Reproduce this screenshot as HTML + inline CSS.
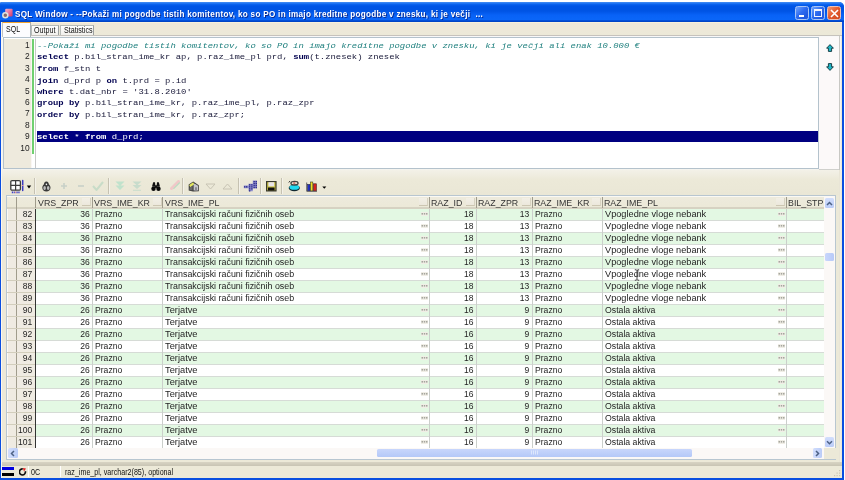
<!DOCTYPE html>
<html><head><meta charset="utf-8">
<style>
*{margin:0;padding:0;box-sizing:border-box}
html,body{width:845px;height:480px;overflow:hidden;background:#fff;font-family:"Liberation Sans",sans-serif}
.a{position:absolute}
#win{left:0;top:2px;width:843.8px;height:478px;background:#0A4FE0;border-radius:1.5px 5px 0 0}
#title{left:0;top:2px;width:843.8px;height:20px;border-radius:1.5px 5px 0 0;background:linear-gradient(#4A90F0 0px,#2A7CF5 1px,#0A62EE 2.5px,#0055E6 4px,#0054E4 9px,#0862F6 13px,#0A66F8 17.5px,#0048D0 18.8px,#0040C0 20px)}
#ttext{left:15px;top:7px;font-weight:bold;font-size:9px;letter-spacing:0.34px;transform:scaleX(0.9);transform-origin:0 0;color:#fff;white-space:pre;text-shadow:1px 1px 0 #0A2A90;line-height:14px}
.tb{top:5.8px;width:14.2px;height:14.6px;border:1px solid #A8C4F4;border-radius:2.5px;background:linear-gradient(135deg,#6EA4FF,#2F6CF0 45%,#1F58E0 80%,#2A5FE0)}
#body{left:1.2px;top:22px;width:840.5px;height:455.5px;background:linear-gradient(#F8F0DC 0,#F8F0DC 1px,#EEE7D8 1.5px,#ECE9D8 14px);border-left:1.2px solid #FAF8F0}
.mono{font-family:"Liberation Mono",monospace;font-size:8.4px;letter-spacing:0.31px;white-space:pre;line-height:11.4px}
.code{font-size:8.9px;letter-spacing:0.01px;line-height:14.25px;transform:scaleY(0.8);transform-origin:0 0}
.tt{font-size:8.8px;line-height:9px;color:#101010;white-space:pre;transform:scaleX(0.81);transform-origin:0 0}
.kw{color:#000050;font-weight:bold}
.sep{width:2px;height:16px;top:178px;background:linear-gradient(90deg,#C6C2B2 50%,#F4F2EA 50%)}
.g{font-size:9.7px;line-height:12px;color:#242424;white-space:pre}
.gl{transform-origin:0 0}
.gr{text-align:right;transform:scaleX(0.882);transform-origin:100% 0}
.hd{top:196px;height:12px;background:#ECE9D8;border-right:1px solid #A8A490}
.hb{top:197.6px;width:9px;height:8.6px;background:linear-gradient(#F2EFE6,#ECE8DC);border-right:1px solid #D6D1C0;border-bottom:1.2px solid #CCC6B2}
#root{left:0;top:0;width:845px;height:480px;filter:blur(0.4px)}
</style></head><body><div id="root" class="a">
<div id="win" class="a"></div>
<div id="title" class="a"></div>
<svg class="a" style="left:2px;top:7.5px" width="12" height="11" viewBox="0 0 12 11">
 <defs><linearGradient id="pk" x1="0" y1="0" x2="1" y2="1"><stop offset="0" stop-color="#F6B0D0"/><stop offset="0.5" stop-color="#E8709C"/><stop offset="1" stop-color="#C83868"/></linearGradient></defs>
 <rect x="3.2" y="0.8" width="7.4" height="7.8" rx="1" fill="url(#pk)"/>
 <circle cx="3.3" cy="7.3" r="2.5" fill="#8A6A6A" stroke="#E0E4E0" stroke-width="1.5"/>
</svg>
<div id="ttext" class="a">SQL Window - --Pokaži mi pogodbe tistih komitentov, ko so PO in imajo kreditne pogodbe v znesku, ki je večji  ...</div>
<div class="a tb" style="left:795.3px"><div class="a" style="left:3px;top:7.8px;width:5.2px;height:2.2px;background:#fff"></div></div>
<div class="a tb" style="left:811.2px"><div class="a" style="left:2.2px;top:2.6px;width:7.8px;height:7.6px;border:1px solid #F0F4FF;border-top-width:2px"></div></div>
<div class="a tb" style="left:826.6px;border-color:#F0C0B0;background:linear-gradient(135deg,#F49A70,#E2582C 50%,#D04A20)">
 <svg class="a" style="left:2px;top:2px" width="9" height="9" viewBox="0 0 9 9"><path d="M1 1L8 8M8 1L1 8" stroke="#fff" stroke-width="1.6"/></svg>
</div>
<div id="body" class="a"></div>

<!-- tabs -->
<div class="a" style="left:2.4px;top:36px;width:839px;height:134px;background:linear-gradient(#F8F8F8,#F4F3EE)"></div>
<div class="a" style="left:1.5px;top:22px;width:29.5px;height:15.3px;background:#FCFCFE;border-left:1px solid #C0C4C4;border-right:1px solid #A8B0B4;border-top:1.8px solid #F3A42F"></div>
<div class="a tt" style="left:5.8px;top:24.5px;transform:scaleX(0.8)">SQL</div>
<div class="a" style="left:31px;top:24.5px;width:28px;height:11.5px;background:linear-gradient(#FEFEFE,#F0EFEA);border:1px solid #B8BCB8;border-right-color:#9CA0A0;border-bottom:none"></div>
<div class="a tt" style="left:34.2px;top:25.7px">Output</div>
<div class="a" style="left:59.5px;top:24.5px;width:34px;height:11.5px;background:linear-gradient(#FEFEFE,#F0EFEA);border:1px solid #B8BCB8;border-right-color:#9CA0A0;border-bottom:none"></div>
<div class="a tt" style="left:63.7px;top:25.7px">Statistics</div>
<div class="a" style="left:30.5px;top:34.8px;width:811px;height:1.3px;background:#C6C2BC"></div>
<div class="a" style="left:3px;top:37.3px;width:816px;height:132.2px;background:#fff;border:1.5px solid #B4C2CC;border-bottom-width:1.6px;border-right-width:1px"></div>
<div class="a" style="left:4px;top:39px;width:27.3px;height:128.9px;background:#EEEADD"></div>
<div class="a" style="left:31.3px;top:39px;width:1.2px;height:128.9px;background:#FBF6F4"></div><div class="a" style="left:34.5px;top:39px;width:1.3px;height:128.9px;background:#C8C8C8"></div>
<div class="a" style="left:32px;top:39px;width:2.4px;height:115px;background:#70D070"></div>
<div class="a" style="left:36.5px;top:131px;width:781px;height:11.3px;background:#000080"></div>
<div class="a mono" style="left:4.5px;top:39.9px;width:25.2px;text-align:right;color:#222;font-family:'Liberation Sans',sans-serif;font-size:8.4px;letter-spacing:0">1
2
3
4
5
6
7
8
9
10</div>
<div class="a mono code" style="left:37px;top:41.35px;color:#181838"><span style="color:#20807F;font-style:italic">--Pokaži mi pogodbe tistih komitentov, ko so PO in imajo kreditne pogodbe v znesku, ki je večji ali enak 10.000 €</span>
<b class="kw">select</b> p.bil_stran_ime_kr ap, p.raz_ime_pl prd, <b class="kw">sum</b>(t.znesek) znesek
<b class="kw">from</b> f_stn t
<b class="kw">join</b> d_prd p <b class="kw">on</b> t.prd = p.id
<b class="kw">where</b> t.dat_nbr = '31.8.2010'
<b class="kw">group by</b> p.bil_stran_ime_kr, p.raz_ime_pl, p.raz_zpr
<b class="kw">order by</b> p.bil_stran_ime_kr, p.raz_zpr;

<span style="color:#fff"><b>select</b> * <b>from</b> d_prd;</span>
</div>
<div class="a" style="left:819px;top:37px;width:20.5px;height:132.5px;background:#FCF9F9;border-bottom:1.2px solid #D0D0CC"></div><div class="a" style="left:838.5px;top:36px;width:1.5px;height:134px;background:#C8C8C4"></div>
<svg class="a" style="left:825.5px;top:44px" width="8" height="8" viewBox="0 0 8 8"><path d="M4 0.6L7.4 4.2H5.6V7.4H2.4V4.2H0.6Z" fill="#20B8C8" stroke="#103038" stroke-width="0.9"/></svg>
<svg class="a" style="left:825.5px;top:62.6px" width="8" height="8" viewBox="0 0 8 8"><path d="M4 7.4L7.4 3.8H5.6V0.6H2.4V3.8H0.6Z" fill="#20B8C8" stroke="#103038" stroke-width="0.9"/></svg>

<!-- toolbar -->
<div class="a" style="left:1.5px;top:170px;width:840px;height:25px;background:linear-gradient(#F3F1E8,#ECE9D8 40%,#EAE7D6)"></div>
<svg class="a" style="left:9px;top:178.5px" width="25" height="15" viewBox="0 0 25 15">
 <rect x="1.8" y="1.6" width="9.6" height="9.6" rx="1.2" fill="#fff" stroke="#3C3C3C" stroke-width="1.3"/>
 <path d="M6.6 1.5V11.3M1.7 6.4H11.5" stroke="#3C3C3C" stroke-width="1.2"/>
 <path d="M13.7 1.5V6M13.7 7V11.5" stroke="#3A3AC0" stroke-width="1.5" stroke-linecap="round"/>
 <path d="M12.6 6.5H14.6" stroke="#E8A0A0" stroke-width="0.8"/>
 <path d="M2.8 13.4H5.8M7.4 13.4H10.6" stroke="#4040C8" stroke-width="1.6" stroke-dasharray="1.3 0.6"/>
 <path d="M6.6 12.6V14.2" stroke="#E08080" stroke-width="0.9"/>
 <path d="M17.8 6.6H22.2L20 9.4Z" fill="#000"/>
</svg>
<div class="a sep" style="left:34px"></div>
<svg class="a" style="left:41.7px;top:180.8px" width="9" height="11" viewBox="0 0 9 11">
 <path d="M4.4 0.4C2.6 0.4 2 1.8 2 3.3C0.8 4.3 0.3 5.6 0.3 6.8C0.3 9 2 10.5 4.4 10.5C6.8 10.5 8.5 9 8.5 6.8C8.5 5.6 8 4.3 6.8 3.3C6.8 1.8 6.2 0.4 4.4 0.4Z" fill="#3A3A3A"/>
 <ellipse cx="2.6" cy="7" rx="1.3" ry="2" fill="#BDBDBD"/>
 <ellipse cx="6.2" cy="7" rx="1.3" ry="2" fill="#BDBDBD"/>
 <circle cx="4.4" cy="3.4" r="0.8" fill="#F0F0F0"/>
</svg>
<svg class="a" style="left:60px;top:182px" width="8" height="8" viewBox="0 0 8 8"><path d="M4 1V7M1 4H7" stroke="#C8D0C8" stroke-width="1.6"/></svg>
<svg class="a" style="left:77px;top:182px" width="8" height="8" viewBox="0 0 8 8"><path d="M1 4H7" stroke="#C8D0C8" stroke-width="1.6"/></svg>
<svg class="a" style="left:92px;top:181px" width="12" height="10" viewBox="0 0 12 10"><path d="M1 5L4.5 9L11 1" stroke="#C8DCC8" stroke-width="2" fill="none"/></svg>
<div class="a sep" style="left:108px"></div>
<svg class="a" style="left:115px;top:181px" width="10" height="10" viewBox="0 0 10 10"><path d="M0.5 0.5H9.5L5 5Z M0.5 4.5H9.5L5 9Z" fill="#C0E2CC"/></svg>
<svg class="a" style="left:132px;top:181px" width="10" height="10" viewBox="0 0 10 10"><path d="M0.5 0.5H9.5L5 4.5Z M0.5 4H9.5L5 8Z" fill="#C8DCCC"/><path d="M1 9.3H9" stroke="#C8DCCC" stroke-width="1"/></svg>
<svg class="a" style="left:149.5px;top:180.5px" width="12" height="11" viewBox="0 0 12 11">
 <path d="M3.2 1.2H5L5.3 4.2H6.7L7 1.2H8.8L10 5.6L7.2 5.8L6.8 7H5.2L4.8 5.8L2 5.6Z" fill="#111"/>
 <circle cx="3.5" cy="7.7" r="2.2" fill="#0A0A0A"/>
 <circle cx="8.5" cy="7.7" r="2.2" fill="#0A0A0A"/>
 
</svg>
<svg class="a" style="left:169.5px;top:180px" width="11" height="10" viewBox="0 0 11 10">
 <path d="M1.5 8.5L8.5 1.5" stroke="#F0C8C8" stroke-width="3" stroke-linecap="round"/>
 <path d="M3.5 8.8L9.8 2.5" stroke="#B8DCC0" stroke-width="1.1"/>
</svg>
<div class="a sep" style="left:182px"></div>
<svg class="a" style="left:187.7px;top:180.6px" width="12" height="11" viewBox="0 0 12 11">
 <path d="M0.7 3.6L5.2 0.6L10.8 4.2V10.2L5 10.5L0.7 9.6Z" fill="#3A3A3A"/>
 <path d="M1.2 3.9L5.1 1.2L6.3 3.3L2.3 6.6Z" fill="#E4E860"/>
 <path d="M1.5 6.5L4.6 4.6V9.6L1.5 8.9Z" fill="#6A6A6A"/>
 <path d="M5.6 3.6L6.4 2.4L10 4.8V9.5H5.6Z" fill="#C4C4CC"/>
 <path d="M7 6.2H9V9.5H7Z" fill="#8A8A90"/>
</svg>
<svg class="a" style="left:205px;top:183px" width="11" height="7" viewBox="0 0 11 7"><path d="M1 1H10L5.5 6Z" fill="none" stroke="#C8C4B4" stroke-width="1"/></svg>
<svg class="a" style="left:222px;top:183px" width="11" height="7" viewBox="0 0 11 7"><path d="M1 6H10L5.5 1Z" fill="none" stroke="#C8C4B4" stroke-width="1"/></svg>
<div class="a sep" style="left:238px"></div>
<svg class="a" style="left:242.5px;top:179.8px" width="15" height="12" viewBox="0 0 15 12">
 <path d="M0.8 5.5H5.5V3.8H9.8V0.6H14V8.2H9.8V11.2H5.5V8.2H0.8Z" fill="#8C8CCC"/>
 <g fill="#2A2A88"><rect x="1.0" y="6.2" width="1.3" height="1.3"/><rect x="3.0" y="6.2" width="1.3" height="1.3"/><rect x="6.0" y="4.2" width="1.3" height="1.3"/><rect x="6.0" y="6.2" width="1.3" height="1.3"/><rect x="6.0" y="8.2" width="1.3" height="1.3"/><rect x="6.0" y="10.2" width="1.3" height="1.3"/><rect x="10.5" y="1.0" width="1.3" height="1.3"/><rect x="12.6" y="1.0" width="1.3" height="1.3"/><rect x="10.5" y="3.0" width="1.3" height="1.3"/><rect x="12.6" y="3.0" width="1.3" height="1.3"/><rect x="10.5" y="5.0" width="1.3" height="1.3"/><rect x="12.6" y="5.0" width="1.3" height="1.3"/><rect x="10.5" y="7.0" width="1.3" height="1.3"/><rect x="12.6" y="7.0" width="1.3" height="1.3"/><rect x="8.2" y="4.2" width="1.3" height="1.3"/><rect x="8.2" y="6.2" width="1.3" height="1.3"/><rect x="8.2" y="8.2" width="1.3" height="1.3"/></g>
</svg>
<div class="a sep" style="left:260px"></div>
<svg class="a" style="left:266px;top:181px" width="11" height="10.5" viewBox="0 0 11 10.5">
 <rect x="0.6" y="0.6" width="9.4" height="9.3" fill="#C8C040" stroke="#3A3A30" stroke-width="1.2"/>
 <rect x="2.4" y="1.2" width="5.8" height="4.2" fill="#E8E4E8"/>
 <rect x="2" y="6.5" width="6.6" height="3" fill="#111"/>
</svg>
<div class="a sep" style="left:281px"></div>
<svg class="a" style="left:287.5px;top:180px" width="12.5" height="12" viewBox="0 0 12.5 12">
 <ellipse cx="6.3" cy="8" rx="5.6" ry="3.2" fill="#102830"/>
 <ellipse cx="6.3" cy="7.4" rx="4.8" ry="2.3" fill="#20D8F0"/>
 <ellipse cx="6.5" cy="3.2" rx="3.6" ry="1.8" fill="none" stroke="#444" stroke-width="1.3"/>
 <rect x="5.3" y="2.4" width="2" height="1.3" fill="#D04040"/>
 <path d="M0.8 2.5L2 1" stroke="#222" stroke-width="0.9"/>
</svg>
<svg class="a" style="left:305.5px;top:180.5px" width="22" height="11" viewBox="0 0 22 11">
 <rect x="1.5" y="3.5" width="2.6" height="6.5" fill="#2030C8" stroke="#202040" stroke-width="0.6"/>
 <rect x="4.6" y="1" width="2.2" height="9" fill="#F0E020" stroke="#404020" stroke-width="0.6"/>
 <rect x="7.4" y="2.8" width="3" height="7.2" fill="#D82020" stroke="#402020" stroke-width="0.6"/>
 <path d="M0.7 1.5V10.3H11" stroke="#666" stroke-width="1" fill="none"/>
 <path d="M16.3 5.5H20.3L18.3 7.8Z" fill="#000"/>
</svg>
<div class="a" style="left:6px;top:195.3px;width:830px;height:265px;border:1px solid #B8C6D0;background:#fff"></div>
<div class="a" style="left:7px;top:196.3px;width:817px;height:11.7px;background:linear-gradient(#FAF9F4 0,#FAF9F4 1px,#EDEADC 1.5px,#ECE9D8 10px)"></div>
<div class="a" style="left:7px;top:207px;width:817px;height:1.5px;background:#D6D2C2"></div>
<div class="a" style="left:7px;top:208.5px;width:28.5px;height:240px;background:#EFEBE2;border-left:1px solid #FAFAF6"></div>
<div class="a" style="left:16px;top:197px;width:1px;height:251px;background:#A09C8C"></div>
<div class="a" style="left:35px;top:197px;width:1px;height:11px;background:#A09C8C"></div>
<div class="a" style="left:35px;top:208.5px;width:1.3px;height:239.5px;background:#333"></div>
<div class="a" style="left:36.3px;top:209px;width:787.7px;height:11px;background:#E3F8E3"></div>
<div class="a g gr" style="left:12px;top:208.3px;width:20.3px">82</div>
<div class="a" style="left:36.3px;top:220px;width:787.7px;height:1px;background:#D6DBD6"></div>
<div class="a" style="left:7px;top:220px;width:28px;height:1px;background:#D2CEBC"></div>
<div class="a" style="left:36.3px;top:221px;width:787.7px;height:11px;background:#FFFFFF"></div>
<div class="a g gr" style="left:12px;top:220.3px;width:20.3px">83</div>
<div class="a" style="left:36.3px;top:232px;width:787.7px;height:1px;background:#D6DBD6"></div>
<div class="a" style="left:7px;top:232px;width:28px;height:1px;background:#D2CEBC"></div>
<div class="a" style="left:36.3px;top:233px;width:787.7px;height:11px;background:#E3F8E3"></div>
<div class="a g gr" style="left:12px;top:232.3px;width:20.3px">84</div>
<div class="a" style="left:36.3px;top:244px;width:787.7px;height:1px;background:#D6DBD6"></div>
<div class="a" style="left:7px;top:244px;width:28px;height:1px;background:#D2CEBC"></div>
<div class="a" style="left:36.3px;top:245px;width:787.7px;height:11px;background:#FFFFFF"></div>
<div class="a g gr" style="left:12px;top:244.3px;width:20.3px">85</div>
<div class="a" style="left:36.3px;top:256px;width:787.7px;height:1px;background:#D6DBD6"></div>
<div class="a" style="left:7px;top:256px;width:28px;height:1px;background:#D2CEBC"></div>
<div class="a" style="left:36.3px;top:257px;width:787.7px;height:11px;background:#E3F8E3"></div>
<div class="a g gr" style="left:12px;top:256.3px;width:20.3px">86</div>
<div class="a" style="left:36.3px;top:268px;width:787.7px;height:1px;background:#D6DBD6"></div>
<div class="a" style="left:7px;top:268px;width:28px;height:1px;background:#D2CEBC"></div>
<div class="a" style="left:36.3px;top:269px;width:787.7px;height:11px;background:#FFFFFF"></div>
<div class="a g gr" style="left:12px;top:268.3px;width:20.3px">87</div>
<div class="a" style="left:36.3px;top:280px;width:787.7px;height:1px;background:#D6DBD6"></div>
<div class="a" style="left:7px;top:280px;width:28px;height:1px;background:#D2CEBC"></div>
<div class="a" style="left:36.3px;top:281px;width:787.7px;height:11px;background:#E3F8E3"></div>
<div class="a g gr" style="left:12px;top:280.3px;width:20.3px">88</div>
<div class="a" style="left:36.3px;top:292px;width:787.7px;height:1px;background:#D6DBD6"></div>
<div class="a" style="left:7px;top:292px;width:28px;height:1px;background:#D2CEBC"></div>
<div class="a" style="left:36.3px;top:293px;width:787.7px;height:11px;background:#FFFFFF"></div>
<div class="a g gr" style="left:12px;top:292.3px;width:20.3px">89</div>
<div class="a" style="left:36.3px;top:304px;width:787.7px;height:1px;background:#D6DBD6"></div>
<div class="a" style="left:7px;top:304px;width:28px;height:1px;background:#D2CEBC"></div>
<div class="a" style="left:36.3px;top:305px;width:787.7px;height:11px;background:#E3F8E3"></div>
<div class="a g gr" style="left:12px;top:304.3px;width:20.3px">90</div>
<div class="a" style="left:36.3px;top:316px;width:787.7px;height:1px;background:#D6DBD6"></div>
<div class="a" style="left:7px;top:316px;width:28px;height:1px;background:#D2CEBC"></div>
<div class="a" style="left:36.3px;top:317px;width:787.7px;height:11px;background:#FFFFFF"></div>
<div class="a g gr" style="left:12px;top:316.3px;width:20.3px">91</div>
<div class="a" style="left:36.3px;top:328px;width:787.7px;height:1px;background:#D6DBD6"></div>
<div class="a" style="left:7px;top:328px;width:28px;height:1px;background:#D2CEBC"></div>
<div class="a" style="left:36.3px;top:329px;width:787.7px;height:11px;background:#E3F8E3"></div>
<div class="a g gr" style="left:12px;top:328.3px;width:20.3px">92</div>
<div class="a" style="left:36.3px;top:340px;width:787.7px;height:1px;background:#D6DBD6"></div>
<div class="a" style="left:7px;top:340px;width:28px;height:1px;background:#D2CEBC"></div>
<div class="a" style="left:36.3px;top:341px;width:787.7px;height:11px;background:#FFFFFF"></div>
<div class="a g gr" style="left:12px;top:340.3px;width:20.3px">93</div>
<div class="a" style="left:36.3px;top:352px;width:787.7px;height:1px;background:#D6DBD6"></div>
<div class="a" style="left:7px;top:352px;width:28px;height:1px;background:#D2CEBC"></div>
<div class="a" style="left:36.3px;top:353px;width:787.7px;height:11px;background:#E3F8E3"></div>
<div class="a g gr" style="left:12px;top:352.3px;width:20.3px">94</div>
<div class="a" style="left:36.3px;top:364px;width:787.7px;height:1px;background:#D6DBD6"></div>
<div class="a" style="left:7px;top:364px;width:28px;height:1px;background:#D2CEBC"></div>
<div class="a" style="left:36.3px;top:365px;width:787.7px;height:11px;background:#FFFFFF"></div>
<div class="a g gr" style="left:12px;top:364.3px;width:20.3px">95</div>
<div class="a" style="left:36.3px;top:376px;width:787.7px;height:1px;background:#D6DBD6"></div>
<div class="a" style="left:7px;top:376px;width:28px;height:1px;background:#D2CEBC"></div>
<div class="a" style="left:36.3px;top:377px;width:787.7px;height:11px;background:#E3F8E3"></div>
<div class="a g gr" style="left:12px;top:376.3px;width:20.3px">96</div>
<div class="a" style="left:36.3px;top:388px;width:787.7px;height:1px;background:#D6DBD6"></div>
<div class="a" style="left:7px;top:388px;width:28px;height:1px;background:#D2CEBC"></div>
<div class="a" style="left:36.3px;top:389px;width:787.7px;height:11px;background:#FFFFFF"></div>
<div class="a g gr" style="left:12px;top:388.3px;width:20.3px">97</div>
<div class="a" style="left:36.3px;top:400px;width:787.7px;height:1px;background:#D6DBD6"></div>
<div class="a" style="left:7px;top:400px;width:28px;height:1px;background:#D2CEBC"></div>
<div class="a" style="left:36.3px;top:401px;width:787.7px;height:11px;background:#E3F8E3"></div>
<div class="a g gr" style="left:12px;top:400.3px;width:20.3px">98</div>
<div class="a" style="left:36.3px;top:412px;width:787.7px;height:1px;background:#D6DBD6"></div>
<div class="a" style="left:7px;top:412px;width:28px;height:1px;background:#D2CEBC"></div>
<div class="a" style="left:36.3px;top:413px;width:787.7px;height:11px;background:#FFFFFF"></div>
<div class="a g gr" style="left:12px;top:412.3px;width:20.3px">99</div>
<div class="a" style="left:36.3px;top:424px;width:787.7px;height:1px;background:#D6DBD6"></div>
<div class="a" style="left:7px;top:424px;width:28px;height:1px;background:#D2CEBC"></div>
<div class="a" style="left:36.3px;top:425px;width:787.7px;height:11px;background:#E3F8E3"></div>
<div class="a g gr" style="left:12px;top:424.3px;width:20.3px">100</div>
<div class="a" style="left:36.3px;top:436px;width:787.7px;height:1px;background:#D6DBD6"></div>
<div class="a" style="left:7px;top:436px;width:28px;height:1px;background:#D2CEBC"></div>
<div class="a" style="left:36.3px;top:437px;width:787.7px;height:11px;background:#FFFFFF"></div>
<div class="a g gr" style="left:12px;top:436.3px;width:20.3px">101</div>
<div class="a" style="left:91.7px;top:208.5px;width:1px;height:239.5px;background:#CBCFCB"></div>
<div class="a" style="left:91.7px;top:197px;width:1px;height:11px;background:#A09C8C"></div>
<div class="a hb" style="left:82.2px"></div>
<div class="a g gl" style="left:37.699999999999996px;top:196.7px;color:#333;transform:scaleX(0.911)">VRS_ZPR</div>
<div class="a" style="left:162.2px;top:208.5px;width:1px;height:239.5px;background:#CBCFCB"></div>
<div class="a" style="left:162.2px;top:197px;width:1px;height:11px;background:#A09C8C"></div>
<div class="a hb" style="left:152.7px"></div>
<div class="a g gl" style="left:94.10000000000001px;top:196.7px;color:#333;transform:scaleX(0.911)">VRS_IME_KR</div>
<div class="a" style="left:428.6px;top:208.5px;width:1px;height:239.5px;background:#CBCFCB"></div>
<div class="a" style="left:428.6px;top:197px;width:1px;height:11px;background:#A09C8C"></div>
<div class="a hb" style="left:419.1px"></div>
<div class="a g gl" style="left:164.6px;top:196.7px;color:#333;transform:scaleX(0.911)">VRS_IME_PL</div>
<div class="a" style="left:475.7px;top:208.5px;width:1px;height:239.5px;background:#CBCFCB"></div>
<div class="a" style="left:475.7px;top:197px;width:1px;height:11px;background:#A09C8C"></div>
<div class="a hb" style="left:466.2px"></div>
<div class="a g gl" style="left:431.0px;top:196.7px;color:#333;transform:scaleX(0.911)">RAZ_ID</div>
<div class="a" style="left:531.6px;top:208.5px;width:1px;height:239.5px;background:#CBCFCB"></div>
<div class="a" style="left:531.6px;top:197px;width:1px;height:11px;background:#A09C8C"></div>
<div class="a hb" style="left:522.1px"></div>
<div class="a g gl" style="left:478.09999999999997px;top:196.7px;color:#333;transform:scaleX(0.911)">RAZ_ZPR</div>
<div class="a" style="left:601.7px;top:208.5px;width:1px;height:239.5px;background:#CBCFCB"></div>
<div class="a" style="left:601.7px;top:197px;width:1px;height:11px;background:#A09C8C"></div>
<div class="a hb" style="left:592.2px"></div>
<div class="a g gl" style="left:534.0px;top:196.7px;color:#333;transform:scaleX(0.911)">RAZ_IME_KR</div>
<div class="a" style="left:785.7px;top:208.5px;width:1px;height:239.5px;background:#CBCFCB"></div>
<div class="a" style="left:785.7px;top:197px;width:1px;height:11px;background:#A09C8C"></div>
<div class="a hb" style="left:776.2px"></div>
<div class="a g gl" style="left:604.1px;top:196.7px;color:#333;transform:scaleX(0.911)">RAZ_IME_PL</div>
<div class="a g gl" style="left:788.1px;top:196.7px;color:#333;transform:scaleX(0.911)">BIL_STP</div>
<div class="a g gr" style="left:35.8px;top:208.3px;width:53.800000000000004px">36</div>
<div class="a g gl" style="left:94.60000000000001px;top:208.3px;transform:scaleX(0.888)">Prazno</div>
<div class="a g gl" style="left:165.1px;top:208.3px;transform:scaleX(0.918)">Transakcijski računi fizičnih oseb</div>
<svg class="a" style="left:420.6px;top:212px" width="7" height="4" viewBox="0 0 7 4"><rect x="0" y="0" width="7" height="4" fill="#F0EEE6"/><rect x="0.5" y="1" width="1.5" height="1.6" fill="#A6A69E"/><rect x="2.75" y="1" width="1.5" height="1.6" fill="#A6A69E"/><rect x="5" y="1" width="1.5" height="1.6" fill="#A6A69E"/></svg>
<div class="a g gr" style="left:429.1px;top:208.3px;width:44.499999999999964px">18</div>
<div class="a g gr" style="left:476.2px;top:208.3px;width:53.30000000000003px">13</div>
<div class="a g gl" style="left:534.5px;top:208.3px;transform:scaleX(0.888)">Prazno</div>
<div class="a g gl" style="left:604.6px;top:208.3px;transform:scaleX(0.949)">Vpogledne vloge nebank</div>
<svg class="a" style="left:777.7px;top:212px" width="7" height="4" viewBox="0 0 7 4"><rect x="0" y="0" width="7" height="4" fill="#F0EEE6"/><rect x="0.5" y="1" width="1.5" height="1.6" fill="#A6A69E"/><rect x="2.75" y="1" width="1.5" height="1.6" fill="#A6A69E"/><rect x="5" y="1" width="1.5" height="1.6" fill="#A6A69E"/></svg>
<div class="a g gr" style="left:35.8px;top:220.3px;width:53.800000000000004px">36</div>
<div class="a g gl" style="left:94.60000000000001px;top:220.3px;transform:scaleX(0.888)">Prazno</div>
<div class="a g gl" style="left:165.1px;top:220.3px;transform:scaleX(0.918)">Transakcijski računi fizičnih oseb</div>
<svg class="a" style="left:420.6px;top:224px" width="7" height="4" viewBox="0 0 7 4"><rect x="0" y="0" width="7" height="4" fill="#F0EEE6"/><rect x="0.5" y="1" width="1.5" height="1.6" fill="#A6A69E"/><rect x="2.75" y="1" width="1.5" height="1.6" fill="#A6A69E"/><rect x="5" y="1" width="1.5" height="1.6" fill="#A6A69E"/></svg>
<div class="a g gr" style="left:429.1px;top:220.3px;width:44.499999999999964px">18</div>
<div class="a g gr" style="left:476.2px;top:220.3px;width:53.30000000000003px">13</div>
<div class="a g gl" style="left:534.5px;top:220.3px;transform:scaleX(0.888)">Prazno</div>
<div class="a g gl" style="left:604.6px;top:220.3px;transform:scaleX(0.949)">Vpogledne vloge nebank</div>
<svg class="a" style="left:777.7px;top:224px" width="7" height="4" viewBox="0 0 7 4"><rect x="0" y="0" width="7" height="4" fill="#F0EEE6"/><rect x="0.5" y="1" width="1.5" height="1.6" fill="#A6A69E"/><rect x="2.75" y="1" width="1.5" height="1.6" fill="#A6A69E"/><rect x="5" y="1" width="1.5" height="1.6" fill="#A6A69E"/></svg>
<div class="a g gr" style="left:35.8px;top:232.3px;width:53.800000000000004px">36</div>
<div class="a g gl" style="left:94.60000000000001px;top:232.3px;transform:scaleX(0.888)">Prazno</div>
<div class="a g gl" style="left:165.1px;top:232.3px;transform:scaleX(0.918)">Transakcijski računi fizičnih oseb</div>
<svg class="a" style="left:420.6px;top:236px" width="7" height="4" viewBox="0 0 7 4"><rect x="0" y="0" width="7" height="4" fill="#F0EEE6"/><rect x="0.5" y="1" width="1.5" height="1.6" fill="#A6A69E"/><rect x="2.75" y="1" width="1.5" height="1.6" fill="#A6A69E"/><rect x="5" y="1" width="1.5" height="1.6" fill="#A6A69E"/></svg>
<div class="a g gr" style="left:429.1px;top:232.3px;width:44.499999999999964px">18</div>
<div class="a g gr" style="left:476.2px;top:232.3px;width:53.30000000000003px">13</div>
<div class="a g gl" style="left:534.5px;top:232.3px;transform:scaleX(0.888)">Prazno</div>
<div class="a g gl" style="left:604.6px;top:232.3px;transform:scaleX(0.949)">Vpogledne vloge nebank</div>
<svg class="a" style="left:777.7px;top:236px" width="7" height="4" viewBox="0 0 7 4"><rect x="0" y="0" width="7" height="4" fill="#F0EEE6"/><rect x="0.5" y="1" width="1.5" height="1.6" fill="#A6A69E"/><rect x="2.75" y="1" width="1.5" height="1.6" fill="#A6A69E"/><rect x="5" y="1" width="1.5" height="1.6" fill="#A6A69E"/></svg>
<div class="a g gr" style="left:35.8px;top:244.3px;width:53.800000000000004px">36</div>
<div class="a g gl" style="left:94.60000000000001px;top:244.3px;transform:scaleX(0.888)">Prazno</div>
<div class="a g gl" style="left:165.1px;top:244.3px;transform:scaleX(0.918)">Transakcijski računi fizičnih oseb</div>
<svg class="a" style="left:420.6px;top:248px" width="7" height="4" viewBox="0 0 7 4"><rect x="0" y="0" width="7" height="4" fill="#F0EEE6"/><rect x="0.5" y="1" width="1.5" height="1.6" fill="#A6A69E"/><rect x="2.75" y="1" width="1.5" height="1.6" fill="#A6A69E"/><rect x="5" y="1" width="1.5" height="1.6" fill="#A6A69E"/></svg>
<div class="a g gr" style="left:429.1px;top:244.3px;width:44.499999999999964px">18</div>
<div class="a g gr" style="left:476.2px;top:244.3px;width:53.30000000000003px">13</div>
<div class="a g gl" style="left:534.5px;top:244.3px;transform:scaleX(0.888)">Prazno</div>
<div class="a g gl" style="left:604.6px;top:244.3px;transform:scaleX(0.949)">Vpogledne vloge nebank</div>
<svg class="a" style="left:777.7px;top:248px" width="7" height="4" viewBox="0 0 7 4"><rect x="0" y="0" width="7" height="4" fill="#F0EEE6"/><rect x="0.5" y="1" width="1.5" height="1.6" fill="#A6A69E"/><rect x="2.75" y="1" width="1.5" height="1.6" fill="#A6A69E"/><rect x="5" y="1" width="1.5" height="1.6" fill="#A6A69E"/></svg>
<div class="a g gr" style="left:35.8px;top:256.3px;width:53.800000000000004px">36</div>
<div class="a g gl" style="left:94.60000000000001px;top:256.3px;transform:scaleX(0.888)">Prazno</div>
<div class="a g gl" style="left:165.1px;top:256.3px;transform:scaleX(0.918)">Transakcijski računi fizičnih oseb</div>
<svg class="a" style="left:420.6px;top:260px" width="7" height="4" viewBox="0 0 7 4"><rect x="0" y="0" width="7" height="4" fill="#F0EEE6"/><rect x="0.5" y="1" width="1.5" height="1.6" fill="#A6A69E"/><rect x="2.75" y="1" width="1.5" height="1.6" fill="#A6A69E"/><rect x="5" y="1" width="1.5" height="1.6" fill="#A6A69E"/></svg>
<div class="a g gr" style="left:429.1px;top:256.3px;width:44.499999999999964px">18</div>
<div class="a g gr" style="left:476.2px;top:256.3px;width:53.30000000000003px">13</div>
<div class="a g gl" style="left:534.5px;top:256.3px;transform:scaleX(0.888)">Prazno</div>
<div class="a g gl" style="left:604.6px;top:256.3px;transform:scaleX(0.949)">Vpogledne vloge nebank</div>
<svg class="a" style="left:777.7px;top:260px" width="7" height="4" viewBox="0 0 7 4"><rect x="0" y="0" width="7" height="4" fill="#F0EEE6"/><rect x="0.5" y="1" width="1.5" height="1.6" fill="#A6A69E"/><rect x="2.75" y="1" width="1.5" height="1.6" fill="#A6A69E"/><rect x="5" y="1" width="1.5" height="1.6" fill="#A6A69E"/></svg>
<div class="a g gr" style="left:35.8px;top:268.3px;width:53.800000000000004px">36</div>
<div class="a g gl" style="left:94.60000000000001px;top:268.3px;transform:scaleX(0.888)">Prazno</div>
<div class="a g gl" style="left:165.1px;top:268.3px;transform:scaleX(0.918)">Transakcijski računi fizičnih oseb</div>
<svg class="a" style="left:420.6px;top:272px" width="7" height="4" viewBox="0 0 7 4"><rect x="0" y="0" width="7" height="4" fill="#F0EEE6"/><rect x="0.5" y="1" width="1.5" height="1.6" fill="#A6A69E"/><rect x="2.75" y="1" width="1.5" height="1.6" fill="#A6A69E"/><rect x="5" y="1" width="1.5" height="1.6" fill="#A6A69E"/></svg>
<div class="a g gr" style="left:429.1px;top:268.3px;width:44.499999999999964px">18</div>
<div class="a g gr" style="left:476.2px;top:268.3px;width:53.30000000000003px">13</div>
<div class="a g gl" style="left:534.5px;top:268.3px;transform:scaleX(0.888)">Prazno</div>
<div class="a g gl" style="left:604.6px;top:268.3px;transform:scaleX(0.949)">Vpogledne vloge nebank</div>
<svg class="a" style="left:777.7px;top:272px" width="7" height="4" viewBox="0 0 7 4"><rect x="0" y="0" width="7" height="4" fill="#F0EEE6"/><rect x="0.5" y="1" width="1.5" height="1.6" fill="#A6A69E"/><rect x="2.75" y="1" width="1.5" height="1.6" fill="#A6A69E"/><rect x="5" y="1" width="1.5" height="1.6" fill="#A6A69E"/></svg>
<div class="a g gr" style="left:35.8px;top:280.3px;width:53.800000000000004px">36</div>
<div class="a g gl" style="left:94.60000000000001px;top:280.3px;transform:scaleX(0.888)">Prazno</div>
<div class="a g gl" style="left:165.1px;top:280.3px;transform:scaleX(0.918)">Transakcijski računi fizičnih oseb</div>
<svg class="a" style="left:420.6px;top:284px" width="7" height="4" viewBox="0 0 7 4"><rect x="0" y="0" width="7" height="4" fill="#F0EEE6"/><rect x="0.5" y="1" width="1.5" height="1.6" fill="#A6A69E"/><rect x="2.75" y="1" width="1.5" height="1.6" fill="#A6A69E"/><rect x="5" y="1" width="1.5" height="1.6" fill="#A6A69E"/></svg>
<div class="a g gr" style="left:429.1px;top:280.3px;width:44.499999999999964px">18</div>
<div class="a g gr" style="left:476.2px;top:280.3px;width:53.30000000000003px">13</div>
<div class="a g gl" style="left:534.5px;top:280.3px;transform:scaleX(0.888)">Prazno</div>
<div class="a g gl" style="left:604.6px;top:280.3px;transform:scaleX(0.949)">Vpogledne vloge nebank</div>
<svg class="a" style="left:777.7px;top:284px" width="7" height="4" viewBox="0 0 7 4"><rect x="0" y="0" width="7" height="4" fill="#F0EEE6"/><rect x="0.5" y="1" width="1.5" height="1.6" fill="#A6A69E"/><rect x="2.75" y="1" width="1.5" height="1.6" fill="#A6A69E"/><rect x="5" y="1" width="1.5" height="1.6" fill="#A6A69E"/></svg>
<div class="a g gr" style="left:35.8px;top:292.3px;width:53.800000000000004px">36</div>
<div class="a g gl" style="left:94.60000000000001px;top:292.3px;transform:scaleX(0.888)">Prazno</div>
<div class="a g gl" style="left:165.1px;top:292.3px;transform:scaleX(0.918)">Transakcijski računi fizičnih oseb</div>
<svg class="a" style="left:420.6px;top:296px" width="7" height="4" viewBox="0 0 7 4"><rect x="0" y="0" width="7" height="4" fill="#F0EEE6"/><rect x="0.5" y="1" width="1.5" height="1.6" fill="#A6A69E"/><rect x="2.75" y="1" width="1.5" height="1.6" fill="#A6A69E"/><rect x="5" y="1" width="1.5" height="1.6" fill="#A6A69E"/></svg>
<div class="a g gr" style="left:429.1px;top:292.3px;width:44.499999999999964px">18</div>
<div class="a g gr" style="left:476.2px;top:292.3px;width:53.30000000000003px">13</div>
<div class="a g gl" style="left:534.5px;top:292.3px;transform:scaleX(0.888)">Prazno</div>
<div class="a g gl" style="left:604.6px;top:292.3px;transform:scaleX(0.949)">Vpogledne vloge nebank</div>
<svg class="a" style="left:777.7px;top:296px" width="7" height="4" viewBox="0 0 7 4"><rect x="0" y="0" width="7" height="4" fill="#F0EEE6"/><rect x="0.5" y="1" width="1.5" height="1.6" fill="#A6A69E"/><rect x="2.75" y="1" width="1.5" height="1.6" fill="#A6A69E"/><rect x="5" y="1" width="1.5" height="1.6" fill="#A6A69E"/></svg>
<div class="a g gr" style="left:35.8px;top:304.3px;width:53.800000000000004px">26</div>
<div class="a g gl" style="left:94.60000000000001px;top:304.3px;transform:scaleX(0.888)">Prazno</div>
<div class="a g gl" style="left:165.1px;top:304.3px;transform:scaleX(0.959)">Terjatve</div>
<svg class="a" style="left:420.6px;top:308px" width="7" height="4" viewBox="0 0 7 4"><rect x="0" y="0" width="7" height="4" fill="#F0EEE6"/><rect x="0.5" y="1" width="1.5" height="1.6" fill="#A6A69E"/><rect x="2.75" y="1" width="1.5" height="1.6" fill="#A6A69E"/><rect x="5" y="1" width="1.5" height="1.6" fill="#A6A69E"/></svg>
<div class="a g gr" style="left:429.1px;top:304.3px;width:44.499999999999964px">16</div>
<div class="a g gr" style="left:476.2px;top:304.3px;width:53.30000000000003px">9</div>
<div class="a g gl" style="left:534.5px;top:304.3px;transform:scaleX(0.888)">Prazno</div>
<div class="a g gl" style="left:604.6px;top:304.3px;transform:scaleX(0.9)">Ostala aktiva</div>
<svg class="a" style="left:777.7px;top:308px" width="7" height="4" viewBox="0 0 7 4"><rect x="0" y="0" width="7" height="4" fill="#F0EEE6"/><rect x="0.5" y="1" width="1.5" height="1.6" fill="#A6A69E"/><rect x="2.75" y="1" width="1.5" height="1.6" fill="#A6A69E"/><rect x="5" y="1" width="1.5" height="1.6" fill="#A6A69E"/></svg>
<div class="a g gr" style="left:35.8px;top:316.3px;width:53.800000000000004px">26</div>
<div class="a g gl" style="left:94.60000000000001px;top:316.3px;transform:scaleX(0.888)">Prazno</div>
<div class="a g gl" style="left:165.1px;top:316.3px;transform:scaleX(0.959)">Terjatve</div>
<svg class="a" style="left:420.6px;top:320px" width="7" height="4" viewBox="0 0 7 4"><rect x="0" y="0" width="7" height="4" fill="#F0EEE6"/><rect x="0.5" y="1" width="1.5" height="1.6" fill="#A6A69E"/><rect x="2.75" y="1" width="1.5" height="1.6" fill="#A6A69E"/><rect x="5" y="1" width="1.5" height="1.6" fill="#A6A69E"/></svg>
<div class="a g gr" style="left:429.1px;top:316.3px;width:44.499999999999964px">16</div>
<div class="a g gr" style="left:476.2px;top:316.3px;width:53.30000000000003px">9</div>
<div class="a g gl" style="left:534.5px;top:316.3px;transform:scaleX(0.888)">Prazno</div>
<div class="a g gl" style="left:604.6px;top:316.3px;transform:scaleX(0.9)">Ostala aktiva</div>
<svg class="a" style="left:777.7px;top:320px" width="7" height="4" viewBox="0 0 7 4"><rect x="0" y="0" width="7" height="4" fill="#F0EEE6"/><rect x="0.5" y="1" width="1.5" height="1.6" fill="#A6A69E"/><rect x="2.75" y="1" width="1.5" height="1.6" fill="#A6A69E"/><rect x="5" y="1" width="1.5" height="1.6" fill="#A6A69E"/></svg>
<div class="a g gr" style="left:35.8px;top:328.3px;width:53.800000000000004px">26</div>
<div class="a g gl" style="left:94.60000000000001px;top:328.3px;transform:scaleX(0.888)">Prazno</div>
<div class="a g gl" style="left:165.1px;top:328.3px;transform:scaleX(0.959)">Terjatve</div>
<svg class="a" style="left:420.6px;top:332px" width="7" height="4" viewBox="0 0 7 4"><rect x="0" y="0" width="7" height="4" fill="#F0EEE6"/><rect x="0.5" y="1" width="1.5" height="1.6" fill="#A6A69E"/><rect x="2.75" y="1" width="1.5" height="1.6" fill="#A6A69E"/><rect x="5" y="1" width="1.5" height="1.6" fill="#A6A69E"/></svg>
<div class="a g gr" style="left:429.1px;top:328.3px;width:44.499999999999964px">16</div>
<div class="a g gr" style="left:476.2px;top:328.3px;width:53.30000000000003px">9</div>
<div class="a g gl" style="left:534.5px;top:328.3px;transform:scaleX(0.888)">Prazno</div>
<div class="a g gl" style="left:604.6px;top:328.3px;transform:scaleX(0.9)">Ostala aktiva</div>
<svg class="a" style="left:777.7px;top:332px" width="7" height="4" viewBox="0 0 7 4"><rect x="0" y="0" width="7" height="4" fill="#F0EEE6"/><rect x="0.5" y="1" width="1.5" height="1.6" fill="#A6A69E"/><rect x="2.75" y="1" width="1.5" height="1.6" fill="#A6A69E"/><rect x="5" y="1" width="1.5" height="1.6" fill="#A6A69E"/></svg>
<div class="a g gr" style="left:35.8px;top:340.3px;width:53.800000000000004px">26</div>
<div class="a g gl" style="left:94.60000000000001px;top:340.3px;transform:scaleX(0.888)">Prazno</div>
<div class="a g gl" style="left:165.1px;top:340.3px;transform:scaleX(0.959)">Terjatve</div>
<svg class="a" style="left:420.6px;top:344px" width="7" height="4" viewBox="0 0 7 4"><rect x="0" y="0" width="7" height="4" fill="#F0EEE6"/><rect x="0.5" y="1" width="1.5" height="1.6" fill="#A6A69E"/><rect x="2.75" y="1" width="1.5" height="1.6" fill="#A6A69E"/><rect x="5" y="1" width="1.5" height="1.6" fill="#A6A69E"/></svg>
<div class="a g gr" style="left:429.1px;top:340.3px;width:44.499999999999964px">16</div>
<div class="a g gr" style="left:476.2px;top:340.3px;width:53.30000000000003px">9</div>
<div class="a g gl" style="left:534.5px;top:340.3px;transform:scaleX(0.888)">Prazno</div>
<div class="a g gl" style="left:604.6px;top:340.3px;transform:scaleX(0.9)">Ostala aktiva</div>
<svg class="a" style="left:777.7px;top:344px" width="7" height="4" viewBox="0 0 7 4"><rect x="0" y="0" width="7" height="4" fill="#F0EEE6"/><rect x="0.5" y="1" width="1.5" height="1.6" fill="#A6A69E"/><rect x="2.75" y="1" width="1.5" height="1.6" fill="#A6A69E"/><rect x="5" y="1" width="1.5" height="1.6" fill="#A6A69E"/></svg>
<div class="a g gr" style="left:35.8px;top:352.3px;width:53.800000000000004px">26</div>
<div class="a g gl" style="left:94.60000000000001px;top:352.3px;transform:scaleX(0.888)">Prazno</div>
<div class="a g gl" style="left:165.1px;top:352.3px;transform:scaleX(0.959)">Terjatve</div>
<svg class="a" style="left:420.6px;top:356px" width="7" height="4" viewBox="0 0 7 4"><rect x="0" y="0" width="7" height="4" fill="#F0EEE6"/><rect x="0.5" y="1" width="1.5" height="1.6" fill="#A6A69E"/><rect x="2.75" y="1" width="1.5" height="1.6" fill="#A6A69E"/><rect x="5" y="1" width="1.5" height="1.6" fill="#A6A69E"/></svg>
<div class="a g gr" style="left:429.1px;top:352.3px;width:44.499999999999964px">16</div>
<div class="a g gr" style="left:476.2px;top:352.3px;width:53.30000000000003px">9</div>
<div class="a g gl" style="left:534.5px;top:352.3px;transform:scaleX(0.888)">Prazno</div>
<div class="a g gl" style="left:604.6px;top:352.3px;transform:scaleX(0.9)">Ostala aktiva</div>
<svg class="a" style="left:777.7px;top:356px" width="7" height="4" viewBox="0 0 7 4"><rect x="0" y="0" width="7" height="4" fill="#F0EEE6"/><rect x="0.5" y="1" width="1.5" height="1.6" fill="#A6A69E"/><rect x="2.75" y="1" width="1.5" height="1.6" fill="#A6A69E"/><rect x="5" y="1" width="1.5" height="1.6" fill="#A6A69E"/></svg>
<div class="a g gr" style="left:35.8px;top:364.3px;width:53.800000000000004px">26</div>
<div class="a g gl" style="left:94.60000000000001px;top:364.3px;transform:scaleX(0.888)">Prazno</div>
<div class="a g gl" style="left:165.1px;top:364.3px;transform:scaleX(0.959)">Terjatve</div>
<svg class="a" style="left:420.6px;top:368px" width="7" height="4" viewBox="0 0 7 4"><rect x="0" y="0" width="7" height="4" fill="#F0EEE6"/><rect x="0.5" y="1" width="1.5" height="1.6" fill="#A6A69E"/><rect x="2.75" y="1" width="1.5" height="1.6" fill="#A6A69E"/><rect x="5" y="1" width="1.5" height="1.6" fill="#A6A69E"/></svg>
<div class="a g gr" style="left:429.1px;top:364.3px;width:44.499999999999964px">16</div>
<div class="a g gr" style="left:476.2px;top:364.3px;width:53.30000000000003px">9</div>
<div class="a g gl" style="left:534.5px;top:364.3px;transform:scaleX(0.888)">Prazno</div>
<div class="a g gl" style="left:604.6px;top:364.3px;transform:scaleX(0.9)">Ostala aktiva</div>
<svg class="a" style="left:777.7px;top:368px" width="7" height="4" viewBox="0 0 7 4"><rect x="0" y="0" width="7" height="4" fill="#F0EEE6"/><rect x="0.5" y="1" width="1.5" height="1.6" fill="#A6A69E"/><rect x="2.75" y="1" width="1.5" height="1.6" fill="#A6A69E"/><rect x="5" y="1" width="1.5" height="1.6" fill="#A6A69E"/></svg>
<div class="a g gr" style="left:35.8px;top:376.3px;width:53.800000000000004px">26</div>
<div class="a g gl" style="left:94.60000000000001px;top:376.3px;transform:scaleX(0.888)">Prazno</div>
<div class="a g gl" style="left:165.1px;top:376.3px;transform:scaleX(0.959)">Terjatve</div>
<svg class="a" style="left:420.6px;top:380px" width="7" height="4" viewBox="0 0 7 4"><rect x="0" y="0" width="7" height="4" fill="#F0EEE6"/><rect x="0.5" y="1" width="1.5" height="1.6" fill="#A6A69E"/><rect x="2.75" y="1" width="1.5" height="1.6" fill="#A6A69E"/><rect x="5" y="1" width="1.5" height="1.6" fill="#A6A69E"/></svg>
<div class="a g gr" style="left:429.1px;top:376.3px;width:44.499999999999964px">16</div>
<div class="a g gr" style="left:476.2px;top:376.3px;width:53.30000000000003px">9</div>
<div class="a g gl" style="left:534.5px;top:376.3px;transform:scaleX(0.888)">Prazno</div>
<div class="a g gl" style="left:604.6px;top:376.3px;transform:scaleX(0.9)">Ostala aktiva</div>
<svg class="a" style="left:777.7px;top:380px" width="7" height="4" viewBox="0 0 7 4"><rect x="0" y="0" width="7" height="4" fill="#F0EEE6"/><rect x="0.5" y="1" width="1.5" height="1.6" fill="#A6A69E"/><rect x="2.75" y="1" width="1.5" height="1.6" fill="#A6A69E"/><rect x="5" y="1" width="1.5" height="1.6" fill="#A6A69E"/></svg>
<div class="a g gr" style="left:35.8px;top:388.3px;width:53.800000000000004px">26</div>
<div class="a g gl" style="left:94.60000000000001px;top:388.3px;transform:scaleX(0.888)">Prazno</div>
<div class="a g gl" style="left:165.1px;top:388.3px;transform:scaleX(0.959)">Terjatve</div>
<svg class="a" style="left:420.6px;top:392px" width="7" height="4" viewBox="0 0 7 4"><rect x="0" y="0" width="7" height="4" fill="#F0EEE6"/><rect x="0.5" y="1" width="1.5" height="1.6" fill="#A6A69E"/><rect x="2.75" y="1" width="1.5" height="1.6" fill="#A6A69E"/><rect x="5" y="1" width="1.5" height="1.6" fill="#A6A69E"/></svg>
<div class="a g gr" style="left:429.1px;top:388.3px;width:44.499999999999964px">16</div>
<div class="a g gr" style="left:476.2px;top:388.3px;width:53.30000000000003px">9</div>
<div class="a g gl" style="left:534.5px;top:388.3px;transform:scaleX(0.888)">Prazno</div>
<div class="a g gl" style="left:604.6px;top:388.3px;transform:scaleX(0.9)">Ostala aktiva</div>
<svg class="a" style="left:777.7px;top:392px" width="7" height="4" viewBox="0 0 7 4"><rect x="0" y="0" width="7" height="4" fill="#F0EEE6"/><rect x="0.5" y="1" width="1.5" height="1.6" fill="#A6A69E"/><rect x="2.75" y="1" width="1.5" height="1.6" fill="#A6A69E"/><rect x="5" y="1" width="1.5" height="1.6" fill="#A6A69E"/></svg>
<div class="a g gr" style="left:35.8px;top:400.3px;width:53.800000000000004px">26</div>
<div class="a g gl" style="left:94.60000000000001px;top:400.3px;transform:scaleX(0.888)">Prazno</div>
<div class="a g gl" style="left:165.1px;top:400.3px;transform:scaleX(0.959)">Terjatve</div>
<svg class="a" style="left:420.6px;top:404px" width="7" height="4" viewBox="0 0 7 4"><rect x="0" y="0" width="7" height="4" fill="#F0EEE6"/><rect x="0.5" y="1" width="1.5" height="1.6" fill="#A6A69E"/><rect x="2.75" y="1" width="1.5" height="1.6" fill="#A6A69E"/><rect x="5" y="1" width="1.5" height="1.6" fill="#A6A69E"/></svg>
<div class="a g gr" style="left:429.1px;top:400.3px;width:44.499999999999964px">16</div>
<div class="a g gr" style="left:476.2px;top:400.3px;width:53.30000000000003px">9</div>
<div class="a g gl" style="left:534.5px;top:400.3px;transform:scaleX(0.888)">Prazno</div>
<div class="a g gl" style="left:604.6px;top:400.3px;transform:scaleX(0.9)">Ostala aktiva</div>
<svg class="a" style="left:777.7px;top:404px" width="7" height="4" viewBox="0 0 7 4"><rect x="0" y="0" width="7" height="4" fill="#F0EEE6"/><rect x="0.5" y="1" width="1.5" height="1.6" fill="#A6A69E"/><rect x="2.75" y="1" width="1.5" height="1.6" fill="#A6A69E"/><rect x="5" y="1" width="1.5" height="1.6" fill="#A6A69E"/></svg>
<div class="a g gr" style="left:35.8px;top:412.3px;width:53.800000000000004px">26</div>
<div class="a g gl" style="left:94.60000000000001px;top:412.3px;transform:scaleX(0.888)">Prazno</div>
<div class="a g gl" style="left:165.1px;top:412.3px;transform:scaleX(0.959)">Terjatve</div>
<svg class="a" style="left:420.6px;top:416px" width="7" height="4" viewBox="0 0 7 4"><rect x="0" y="0" width="7" height="4" fill="#F0EEE6"/><rect x="0.5" y="1" width="1.5" height="1.6" fill="#A6A69E"/><rect x="2.75" y="1" width="1.5" height="1.6" fill="#A6A69E"/><rect x="5" y="1" width="1.5" height="1.6" fill="#A6A69E"/></svg>
<div class="a g gr" style="left:429.1px;top:412.3px;width:44.499999999999964px">16</div>
<div class="a g gr" style="left:476.2px;top:412.3px;width:53.30000000000003px">9</div>
<div class="a g gl" style="left:534.5px;top:412.3px;transform:scaleX(0.888)">Prazno</div>
<div class="a g gl" style="left:604.6px;top:412.3px;transform:scaleX(0.9)">Ostala aktiva</div>
<svg class="a" style="left:777.7px;top:416px" width="7" height="4" viewBox="0 0 7 4"><rect x="0" y="0" width="7" height="4" fill="#F0EEE6"/><rect x="0.5" y="1" width="1.5" height="1.6" fill="#A6A69E"/><rect x="2.75" y="1" width="1.5" height="1.6" fill="#A6A69E"/><rect x="5" y="1" width="1.5" height="1.6" fill="#A6A69E"/></svg>
<div class="a g gr" style="left:35.8px;top:424.3px;width:53.800000000000004px">26</div>
<div class="a g gl" style="left:94.60000000000001px;top:424.3px;transform:scaleX(0.888)">Prazno</div>
<div class="a g gl" style="left:165.1px;top:424.3px;transform:scaleX(0.959)">Terjatve</div>
<svg class="a" style="left:420.6px;top:428px" width="7" height="4" viewBox="0 0 7 4"><rect x="0" y="0" width="7" height="4" fill="#F0EEE6"/><rect x="0.5" y="1" width="1.5" height="1.6" fill="#A6A69E"/><rect x="2.75" y="1" width="1.5" height="1.6" fill="#A6A69E"/><rect x="5" y="1" width="1.5" height="1.6" fill="#A6A69E"/></svg>
<div class="a g gr" style="left:429.1px;top:424.3px;width:44.499999999999964px">16</div>
<div class="a g gr" style="left:476.2px;top:424.3px;width:53.30000000000003px">9</div>
<div class="a g gl" style="left:534.5px;top:424.3px;transform:scaleX(0.888)">Prazno</div>
<div class="a g gl" style="left:604.6px;top:424.3px;transform:scaleX(0.9)">Ostala aktiva</div>
<svg class="a" style="left:777.7px;top:428px" width="7" height="4" viewBox="0 0 7 4"><rect x="0" y="0" width="7" height="4" fill="#F0EEE6"/><rect x="0.5" y="1" width="1.5" height="1.6" fill="#A6A69E"/><rect x="2.75" y="1" width="1.5" height="1.6" fill="#A6A69E"/><rect x="5" y="1" width="1.5" height="1.6" fill="#A6A69E"/></svg>
<div class="a g gr" style="left:35.8px;top:436.3px;width:53.800000000000004px">26</div>
<div class="a g gl" style="left:94.60000000000001px;top:436.3px;transform:scaleX(0.888)">Prazno</div>
<div class="a g gl" style="left:165.1px;top:436.3px;transform:scaleX(0.959)">Terjatve</div>
<svg class="a" style="left:420.6px;top:440px" width="7" height="4" viewBox="0 0 7 4"><rect x="0" y="0" width="7" height="4" fill="#F0EEE6"/><rect x="0.5" y="1" width="1.5" height="1.6" fill="#A6A69E"/><rect x="2.75" y="1" width="1.5" height="1.6" fill="#A6A69E"/><rect x="5" y="1" width="1.5" height="1.6" fill="#A6A69E"/></svg>
<div class="a g gr" style="left:429.1px;top:436.3px;width:44.499999999999964px">16</div>
<div class="a g gr" style="left:476.2px;top:436.3px;width:53.30000000000003px">9</div>
<div class="a g gl" style="left:534.5px;top:436.3px;transform:scaleX(0.888)">Prazno</div>
<div class="a g gl" style="left:604.6px;top:436.3px;transform:scaleX(0.9)">Ostala aktiva</div>
<svg class="a" style="left:777.7px;top:440px" width="7" height="4" viewBox="0 0 7 4"><rect x="0" y="0" width="7" height="4" fill="#F0EEE6"/><rect x="0.5" y="1" width="1.5" height="1.6" fill="#A6A69E"/><rect x="2.75" y="1" width="1.5" height="1.6" fill="#A6A69E"/><rect x="5" y="1" width="1.5" height="1.6" fill="#A6A69E"/></svg>
<div class="a" style="left:824px;top:196.3px;width:11px;height:252px;background:#FBF8F6"></div>
<div class="a" style="left:824.8px;top:198px;width:9.4px;height:10px;background:linear-gradient(#D2DEFC,#BACCF8);border-radius:1.5px"></div>
<svg class="a" style="left:826px;top:200.5px" width="7" height="5" viewBox="0 0 7 5"><path d="M1 4L3.5 1.5L6 4" stroke="#4D6185" stroke-width="1.5" fill="none"/></svg>
<div class="a" style="left:824.8px;top:252.5px;width:9.4px;height:8.5px;background:linear-gradient(90deg,#C8D6FC,#B8CAF8);border-radius:1.5px"></div>
<div class="a" style="left:824.8px;top:437px;width:9.4px;height:10px;background:linear-gradient(#D2DEFC,#BACCF8);border-radius:1.5px"></div>
<svg class="a" style="left:826px;top:439.5px" width="7" height="5" viewBox="0 0 7 5"><path d="M1 1.2L3.5 3.7L6 1.2" stroke="#4D6185" stroke-width="1.5" fill="none"/></svg>
<div class="a" style="left:7px;top:448px;width:817px;height:11.3px;background:#FBF8F6"></div>
<div class="a" style="left:7.5px;top:448.3px;width:10.5px;height:10px;background:linear-gradient(90deg,#D2DEFC,#BACCF8);border-radius:1.5px"></div>
<svg class="a" style="left:10px;top:450px" width="5" height="7" viewBox="0 0 5 7"><path d="M4 1L1.5 3.5L4 6" stroke="#4D6185" stroke-width="1.5" fill="none"/></svg>
<div class="a" style="left:376.5px;top:448.5px;width:315.5px;height:8.6px;background:linear-gradient(#C8D6FC,#B4C8F8);border-radius:1.5px"></div>
<svg class="a" style="left:530.5px;top:450px" width="7" height="5" viewBox="0 0 7 5"><path d="M0.5 0.5V4.5M2.5 0.5V4.5M4.5 0.5V4.5M6.5 0.5V4.5" stroke="#E4ECFC" stroke-width="0.8"/></svg>
<div class="a" style="left:812.8px;top:448.3px;width:9.5px;height:10px;background:linear-gradient(90deg,#D2DEFC,#BACCF8);border-radius:1.5px"></div>
<svg class="a" style="left:815px;top:450px" width="5" height="7" viewBox="0 0 5 7"><path d="M1 1L3.5 3.5L1 6" stroke="#4D6185" stroke-width="1.5" fill="none"/></svg>
<div class="a" style="left:823.5px;top:448px;width:12px;height:11.3px;background:#ECE9D8"></div>
<div class="a" style="left:839.2px;top:170px;width:2px;height:292px;background:linear-gradient(90deg,#E4E0D0,#F6F4EC)"></div>
<!-- status bar -->
<div class="a" style="left:1.5px;top:462px;width:840px;height:4px;background:linear-gradient(#D8D4C4,#C8C4B4)"></div>
<div class="a" style="left:2px;top:467px;width:12px;height:3px;background:#0000E0"></div>
<div class="a" style="left:2px;top:473px;width:12px;height:3px;background:#000"></div>
<svg class="a" style="left:18.5px;top:467.5px" width="8" height="8" viewBox="0 0 8 8"><path d="M6.3 3.2A3 3 0 1 1 3.8 1" stroke="#111" stroke-width="1.7" fill="none"/><path d="M3.8 0L7 0.6L5 3.4Z" fill="#E02020"/></svg>
<div class="a" style="left:28px;top:466px;width:1px;height:11px;background:#C8C4B0;border-right:1px solid #fff"></div>
<div class="a tt" style="left:31.3px;top:468px">0C</div>
<div class="a" style="left:60px;top:466px;width:1px;height:11px;background:#C8C4B0;border-right:1px solid #fff"></div>
<div class="a tt" style="left:64.5px;top:468px">raz_ime_pl, varchar2(85), optional</div>

<svg class="a" style="left:634px;top:269px" width="6" height="12" viewBox="0 0 6 12"><path d="M0.8 0.8H2.4L3 1.5L3.6 0.8H5.2M3 1.5V10.5M0.8 11.2H2.4L3 10.5L3.6 11.2H5.2" stroke="#333" stroke-width="0.9" fill="none"/></svg>
<svg class="a" style="left:833px;top:469px" width="9" height="9" viewBox="0 0 9 9">
 <g fill="#C8C4B4"><rect x="6" y="1" width="1.2" height="1.2"/><rect x="3.5" y="3.5" width="1.2" height="1.2"/><rect x="6" y="3.5" width="1.2" height="1.2"/><rect x="1" y="6" width="1.2" height="1.2"/><rect x="3.5" y="6" width="1.2" height="1.2"/><rect x="6" y="6" width="1.2" height="1.2"/></g>
</svg>
</div></body></html>
